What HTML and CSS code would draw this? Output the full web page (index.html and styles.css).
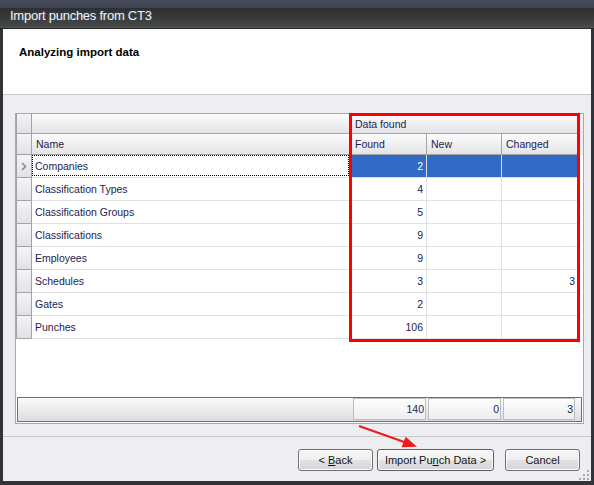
FILE: index.html
```html
<!DOCTYPE html>
<html>
<head>
<meta charset="utf-8">
<title>Import punches from CT3</title>
<link rel="stylesheet" href="styles.css">
</head>
<body>
<div class="window">
  <div class="titlebar"><span class="title">Import punches from CT3</span></div>
  <div class="client">
    <div class="header"><h1>Analyzing import data</h1></div>
    <div class="content">
      <div class="grid">
        <div class="row band">
          <div class="hcell ind"></div>
          <div class="hcell"></div>
          <div class="hcell first">Data found</div>
        </div>
        <div class="row cols">
          <div class="hcell ind"></div>
          <div class="hcell">Name</div>
          <div class="hcell first">Found</div>
          <div class="hcell">New</div>
          <div class="hcell">Changed</div>
        </div>
        <div class="row data selected">
          <div class="ind"><svg class="chev" width="6" height="9" viewBox="0 0 6 9"><path d="M1 1 L4.5 4.5 L1 8" fill="none" stroke="#8c8c8c" stroke-width="1.6"/></svg></div>
          <div class="cell name focus">Companies</div>
          <div class="cell num">2</div>
          <div class="cell num"></div>
          <div class="cell num"></div>
        </div>
        <div class="row data">
          <div class="ind"></div>
          <div class="cell name">Classification Types</div>
          <div class="cell num">4</div>
          <div class="cell num"></div>
          <div class="cell num"></div>
        </div>
        <div class="row data">
          <div class="ind"></div>
          <div class="cell name">Classification Groups</div>
          <div class="cell num">5</div>
          <div class="cell num"></div>
          <div class="cell num"></div>
        </div>
        <div class="row data">
          <div class="ind"></div>
          <div class="cell name">Classifications</div>
          <div class="cell num">9</div>
          <div class="cell num"></div>
          <div class="cell num"></div>
        </div>
        <div class="row data">
          <div class="ind"></div>
          <div class="cell name">Employees</div>
          <div class="cell num">9</div>
          <div class="cell num"></div>
          <div class="cell num"></div>
        </div>
        <div class="row data">
          <div class="ind"></div>
          <div class="cell name">Schedules</div>
          <div class="cell num">3</div>
          <div class="cell num"></div>
          <div class="cell num">3</div>
        </div>
        <div class="row data">
          <div class="ind"></div>
          <div class="cell name">Gates</div>
          <div class="cell num">2</div>
          <div class="cell num"></div>
          <div class="cell num"></div>
        </div>
        <div class="row data">
          <div class="ind"></div>
          <div class="cell name">Punches</div>
          <div class="cell num">106</div>
          <div class="cell num"></div>
          <div class="cell num"></div>
        </div>
        <div class="spacer"></div>
        <div class="footer">
          <div class="sum">140</div>
          <div class="sum">0</div>
          <div class="sum">3</div>
        </div>
      </div>
    </div>
    <div class="buttons">
      <button class="btn back">&lt; <u>B</u>ack</button>
      <button class="btn import">Import Pu<u>n</u>ch Data &gt;</button>
      <button class="btn cancel">Cancel</button>
    </div>
  </div>
  <div class="highlight"></div>
  <svg class="arrow" width="70" height="32" viewBox="0 0 70 32">
    <line x1="4" y1="6" x2="52" y2="23" stroke="#ec1c1c" stroke-width="2.2"/>
    <polygon points="62,26.7 46.6,27.2 50.6,16.8" fill="#ec1c1c"/>
  </svg>
  <svg class="grip" width="12" height="12" viewBox="0 0 12 12">
    <rect x="9" y="1" width="2" height="2" fill="#a9a9ad"/>
    <rect x="5" y="5" width="2" height="2" fill="#a9a9ad"/>
    <rect x="9" y="5" width="2" height="2" fill="#a9a9ad"/>
    <rect x="1" y="9" width="2" height="2" fill="#a9a9ad"/>
    <rect x="5" y="9" width="2" height="2" fill="#a9a9ad"/>
    <rect x="9" y="9" width="2" height="2" fill="#a9a9ad"/>
  </svg>
</div>
</body>
</html>
```

FILE: styles.css
```css
html, body {
  margin: 0;
  padding: 0;
  background: #313237;
}

body {
  font-family: "Liberation Sans", Arial, sans-serif;
}

.window {
  position: relative;
  width: 594px;
  height: 485px;
  background: #323338;
  display: flex;
  flex-direction: column;
  overflow: hidden;
}

.titlebar {
  box-sizing: border-box;
  height: 29px;
  border-bottom: 1px solid #27282a;
  background: linear-gradient(to bottom, #474c5c 0, #3d4252 8px, #2e302f 8px, #363837 16px, #464747 26px, #525252 28px);
  display: flex;
  align-items: center;
  padding: 2px 0 0 10px;
}

.title {
  color: #eef2f6;
  font-size: 13px;
  letter-spacing: -0.25px;
  text-shadow: 0 0 3px rgba(120, 150, 200, 0.35);
}

.client {
  flex: 1;
  margin: 0 3px 4px 3px;
  background: #eeeef2;
  display: flex;
  flex-direction: column;
  position: relative;
}

.header {
  height: 65px;
  background: #ffffff;
  border-bottom: 1px solid #c6c6c8;
}

.header h1 {
  margin: 0;
  padding: 16px 0 0 16px;
  font-size: 11.5px;
  line-height: 14px;
  font-weight: bold;
  color: #000000;
}

.content {
  box-sizing: border-box;
  height: 342px;
  padding: 18px 7px 0 12px;
  border-bottom: 1px solid #c8c8cb;
}

.grid {
  box-sizing: border-box;
  height: 311px;
  border: 1px solid #a8a8ab;
  background: #ffffff;
  display: flex;
  flex-direction: column;
  font-size: 10.5px;
  color: #1c1c50;
}

.row {
  display: grid;
  grid-template-columns: 16px 318px 77px 75px 77px;
}

.row.band {
  grid-template-columns: 16px 318px 229px;
  height: 20px;
  background: #efeff1;
}

.row.cols {
  height: 21px;
  background: #efeff1;
}

.hcell {
  box-sizing: border-box;
  background: linear-gradient(to bottom, #fcfcfc 0%, #f1f1f3 45%, #e4e4e8 100%);
  border-right: 1px solid #a3a3a6;
  border-bottom: 1px solid #a3a3a6;
  padding-left: 4px;
  display: flex;
  align-items: center;
  white-space: nowrap;
}

.hcell.first {
  padding-left: 5px;
}

.hcell.ind {
  border-left: 1px solid #a3a3a6;
  padding: 0;
}

.row.data {
  height: 23px;
}

.ind {
  box-sizing: border-box;
  background: linear-gradient(to bottom, #f4f4f6 0%, #e2e2e6 100%);
  border-left: 1px solid #a3a3a6;
  border-right: 1px solid #a3a3a6;
  border-bottom: 1px solid #a3a3a6;
  display: flex;
  align-items: center;
  padding-left: 4px;
}

.cell {
  box-sizing: border-box;
  border-right: 1px solid #e2e2e4;
  border-bottom: 1px solid #e2e2e4;
  line-height: 22px;
  white-space: nowrap;
}

.cell.name {
  padding-left: 3px;
}

.cell.num {
  text-align: right;
  padding-right: 3px;
}

.selected .cell.num {
  background: #316ac5;
  color: #ffffff;
  border-right-color: #dcdce0;
}

.focus {
  position: relative;
}

.focus::after {
  content: "";
  position: absolute;
  left: 0;
  top: 0;
  right: 0;
  bottom: 1px;
  border: 1px dotted #000000;
}

.spacer {
  flex: 1;
}

.footer {
  box-sizing: border-box;
  height: 25px;
  margin: 0 1px 1px 1px;
  border: 1px solid #6f6f72;
  background: linear-gradient(to bottom, #fbfbfb 0%, #ececee 50%, #dcdce0 100%);
  display: grid;
  grid-template-columns: 1fr 73px 73px 72px;
  column-gap: 2px;
  padding-right: 6px;
  align-items: start;
}

.sum {
  box-sizing: border-box;
  height: 22px;
  border: 1px solid #bcbcc0;
  background: linear-gradient(to bottom, #fdfdfd 0%, #eeeef0 100%);
  text-align: right;
  padding-right: 1px;
  line-height: 20px;
}

.sum:first-child {
  grid-column: 2;
}

.buttons {
  flex: 1;
  display: flex;
  justify-content: flex-end;
  align-items: flex-start;
  padding: 12px 11px 0 0;
}

.btn {
  box-sizing: border-box;
  height: 22px;
  padding: 0;
  border: 1px solid #707073;
  border-radius: 3px;
  background: linear-gradient(to bottom, #f7f7f7 0%, #efefef 50%, #e2e2e2 50%, #d6d6d6 100%);
  box-shadow: inset 0 0 0 1px #fcfcfc;
  font-family: "Liberation Sans", Arial, sans-serif;
  font-size: 11px;
  color: #151515;
}

.btn u {
  text-decoration: underline;
}

.back {
  width: 75px;
  margin-right: 4px;
}

.import {
  width: 117px;
  margin-right: 11px;
  border-color: #5f5f63;
}

.cancel {
  width: 75px;
}

.highlight {
  position: absolute;
  left: 349px;
  top: 113px;
  width: 231px;
  height: 229px;
  box-sizing: border-box;
  border: 3px solid #ff0000;
}

.arrow {
  position: absolute;
  left: 355px;
  top: 420px;
}

.grip {
  position: absolute;
  left: 578px;
  top: 469px;
}
```
